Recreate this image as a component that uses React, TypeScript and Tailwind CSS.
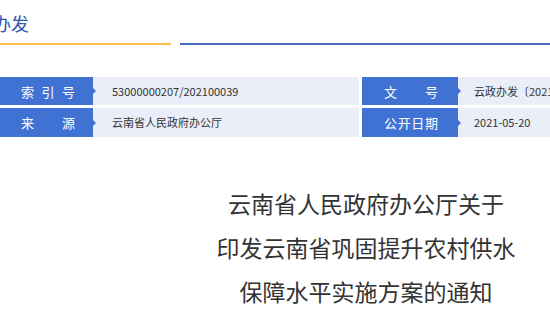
const font = { fontFamily: '"Noto Sans CJK SC", "Noto Sans", sans-serif' };

function Label({ chars, width, pl }: { chars: string[]; width: string; pl: string }) {
    return (
        <div className={`relative h-full bg-[#4072d4] flex items-center shrink-0 ${width} ${pl}`}>
            <div className="flex justify-between w-[54px] text-[13px] text-white leading-none">
                {chars.map((c, i) => (
                    <span key={i}>{c}</span>
                ))}
            </div>
            {/* small pointer on the right edge */}
            <span className="absolute right-[-3px] top-1/2 -translate-y-1/2 w-0 h-0 border-y-[3px] border-y-transparent border-l-[3px] border-l-[#4072d4]" />
        </div>
    );
}

function Value({ text, className }: { text: string; className: string }) {
    return (
        <div className={`h-full bg-[#e9eef8] flex items-center text-[11px] text-[#333] whitespace-nowrap overflow-hidden ${className}`}>
            {text}
        </div>
    );
}

export default function App() {
    return (
        <div className="w-[550px] h-[320px] overflow-hidden bg-white" style={font}>
            {/* header */}
            <div className="h-[43px] flex items-center pt-[3px]">
                <span className="ml-[-7px] text-[18px] text-[#2f58ae] leading-none">办发</span>
            </div>
            <div className="flex items-center gap-[9px]">
                <div className="w-[171px] h-[2px] bg-[#f8bb4c]" />
                <div className="flex-1 h-[2px] bg-[#4a6cc2]" />
            </div>

            {/* info table */}
            <div className="mt-[32px] flex flex-col gap-[3px]">
                <div className="flex h-[28px]">
                    <Label chars={['索', '引', '号']} width="w-[93px]" pl="pl-[21px]" />
                    <Value text="53000000207/202100039" className="w-[266px] pl-[19px]" />
                    <div className="w-[3px] shrink-0" />
                    <Label chars={['文', '号']} width="w-[96px]" pl="pl-[22px]" />
                    <Value text="云政办发〔2021〕" className="flex-1 pl-[16px]" />
                </div>
                <div className="flex h-[29px]">
                    <Label chars={['来', '源']} width="w-[93px]" pl="pl-[21px]" />
                    <Value text="云南省人民政府办公厅" className="w-[266px] pl-[19px]" />
                    <div className="w-[3px] shrink-0" />
                    <Label chars={['公', '开', '日', '期']} width="w-[96px]" pl="pl-[22px]" />
                    <Value text="2021-05-20" className="flex-1 pl-[16px]" />
                </div>
            </div>

            {/* title */}
            <div className="mt-[44px] pl-[182px] text-center text-[23px] leading-[44px] text-[#333]">
                <div>云南省人民政府办公厅关于</div>
                <div>印发云南省巩固提升农村供水</div>
                <div>保障水平实施方案的通知</div>
            </div>
        </div>
    );
}
